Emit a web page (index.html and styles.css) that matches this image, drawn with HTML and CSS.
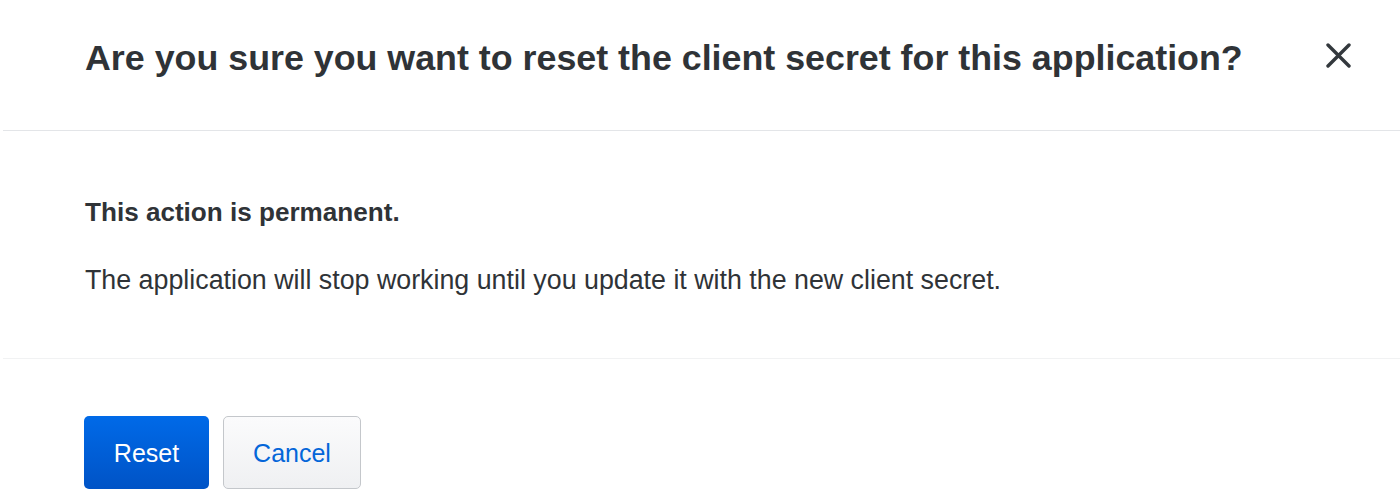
FILE: index.html
```html
<!DOCTYPE html>
<html lang="en">
<head>
<meta charset="UTF-8">
<title>Reset client secret</title>
<link rel="stylesheet" href="styles.css">
</head>
<body>
<div class="dialog">
  <div class="dialog-header">
    <h2>Are you sure you want to reset the client secret for this application?</h2>
    <button class="close" aria-label="Close">
      <svg width="25" height="25" viewBox="0 0 25 25">
        <path d="M2 2L23 23M23 2L2 23" stroke="#33383d" stroke-width="3.4" stroke-linecap="round"/>
      </svg>
    </button>
  </div>

  <div class="dialog-body">
    <p class="strong">This action is permanent.</p>
    <p>The application will stop working until you update it with the new client secret.</p>
  </div>

  <div class="dialog-footer">
    <button class="btn btn-primary">Reset</button>
    <button class="btn btn-default">Cancel</button>
  </div>
</div>
</body>
</html>
```

FILE: styles.css
```css
body {
  margin: 0;
  background: #fff;
  color: #2f3337;
  font-family: 'Liberation Sans', Arial, sans-serif;
}

.dialog {
  margin-left: 3px;
}

.dialog-header {
  display: flex;
  align-items: flex-start;
  justify-content: space-between;
  height: 131px;
  box-sizing: border-box;
  padding: 37px 49px 0 82px;
  border-bottom: 1px solid #e3e5e8;
}

.dialog-header h2 {
  margin: 0;
  font-size: 35.8px;
  line-height: 42px;
  font-weight: bold;
  color: #2f3337;
}

.close {
  background: none;
  border: none;
  padding: 0;
  margin-top: 6px;
  width: 25px;
  height: 25px;
  cursor: pointer;
}

.close svg {
  display: block;
}

.dialog-body {
  height: 228px;
  box-sizing: border-box;
  padding: 66px 0 0 82px;
  border-bottom: 1px solid #f1f2f3;
}

.dialog-body p {
  margin: 0 0 38px 0;
  font-size: 26.8px;
  line-height: 30px;
}

.dialog-body .strong {
  font-size: 26.1px;
  font-weight: bold;
}

.dialog-footer {
  display: flex;
  gap: 14px;
  padding: 57px 0 0 81px;
}

.btn {
  height: 73px;
  padding-top: 3px;
  border-radius: 5px;
  font-family: 'Liberation Sans', Arial, sans-serif;
  font-size: 25px;
  cursor: pointer;
}

.btn-primary {
  width: 125px;
  border: none;
  color: #fff;
  background: linear-gradient(#006ae8, #0053c6);
}

.btn-default {
  width: 138px;
  border: 1px solid #c4c7cb;
  color: #0466d9;
  background: linear-gradient(#fbfbfc, #eff0f2);
}
```
